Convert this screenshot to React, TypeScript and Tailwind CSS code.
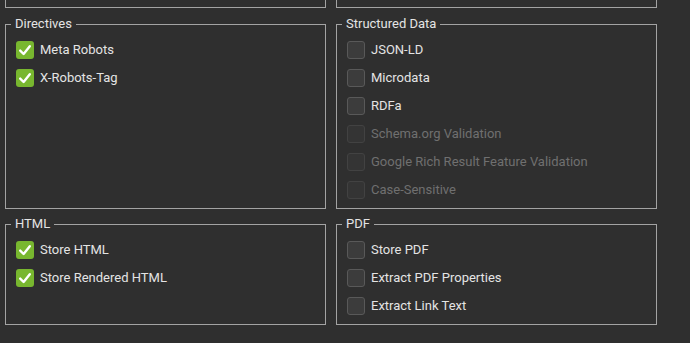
import React from 'react';

type Item = { label: string; checked?: boolean; disabled?: boolean };

const DIRECTIVES: Item[] = [
  { label: 'Meta Robots', checked: true },
  { label: 'X-Robots-Tag', checked: true },
];

const STRUCTURED: Item[] = [
  { label: 'JSON-LD' },
  { label: 'Microdata' },
  { label: 'RDFa' },
  { label: 'Schema.org Validation', disabled: true },
  { label: 'Google Rich Result Feature Validation', disabled: true },
  { label: 'Case-Sensitive', disabled: true },
];

const HTML_ITEMS: Item[] = [
  { label: 'Store HTML', checked: true },
  { label: 'Store Rendered HTML', checked: true },
];

const PDF_ITEMS: Item[] = [
  { label: 'Store PDF' },
  { label: 'Extract PDF Properties' },
  { label: 'Extract Link Text' },
];

const CheckBox: React.FC<{ checked?: boolean; disabled?: boolean }> = ({ checked, disabled }) => {
  if (checked) {
    return (
      <span className="w-[18px] h-[18px] rounded-[3px] bg-[#78b72f] flex items-center justify-center shrink-0">
        <svg width="18" height="18" viewBox="0 0 18 18">
          <path d="M4.2 9.6 L7.6 13 L13.8 5.2" fill="none" stroke="#ffffff" strokeWidth="2.4" strokeLinecap="round" strokeLinejoin="round" />
        </svg>
      </span>
    );
  }
  return (
    <span
      className={
        disabled
          ? 'w-[18px] h-[18px] rounded-[3px] bg-[#343434] border border-[#424242] shrink-0'
          : 'w-[18px] h-[18px] rounded-[3px] bg-[#3c3c3c] border border-[#595959] shrink-0'
      }
    />
  );
};

const Group: React.FC<{ title: string; items: Item[]; height: string }> = ({ title, items, height }) => (
  <fieldset className={`border border-[#a3a3a3] ${height}`}>
    <legend className="ml-[5px] px-[4px] text-[13px] leading-[16px] text-[#e4e4e4]">{title}</legend>
    <div className="pt-[4px] pl-[10px]">
      {items.map(item => (
        <div key={item.label} className="h-[28px] flex items-center gap-[6px]">
          <CheckBox checked={item.checked} disabled={item.disabled} />
          <span className={item.disabled ? 'text-[13px] text-[#707070]' : 'text-[13px] text-[#e4e4e4]'}>
            {item.label}
          </span>
        </div>
      ))}
    </div>
  </fieldset>
);

export default function App() {
  return (
    <div
      className="w-[690px] h-[343px] bg-[#2f2f2f] overflow-hidden pl-[5px]"
      style={{ fontFamily: 'Roboto, "Noto Sans", sans-serif' }}
    >
      <div className="w-[652px] grid grid-cols-2 gap-x-[10px]">
        {/* panels above, scrolled off */}
        <div className="h-[8px] border-x border-b border-[#a3a3a3]" />
        <div className="h-[8px] border-x border-b border-[#a3a3a3]" />

        <div className="mt-[8px]">
          <Group title="Directives" items={DIRECTIVES} height="h-[193px]" />
        </div>
        <div className="mt-[8px]">
          <Group title="Structured Data" items={STRUCTURED} height="h-[193px]" />
        </div>

        <div className="mt-[7px]">
          <Group title="HTML" items={HTML_ITEMS} height="h-[109px]" />
        </div>
        <div className="mt-[7px]">
          <Group title="PDF" items={PDF_ITEMS} height="h-[109px]" />
        </div>
      </div>
    </div>
  );
}
